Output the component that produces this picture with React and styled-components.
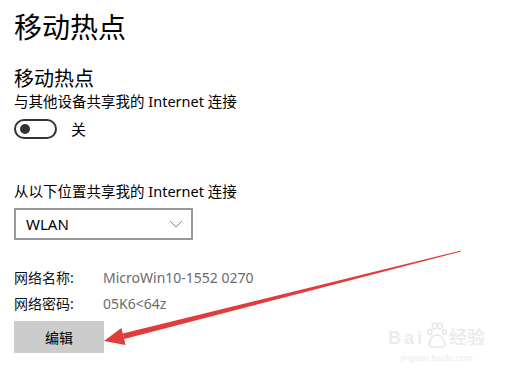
import React from 'react';
import styled, { createGlobalStyle } from 'styled-components';

const GlobalStyle = createGlobalStyle`
html, body {
  margin: 0;
  padding: 0;
  background: #fff;
}
body {
  font-family: "Noto Sans", "Noto Sans CJK SC", sans-serif;
  color: #000;
}
`
const Page = styled.div`
position: relative;
width: 506px;
height: 379px;
overflow: hidden;
box-sizing: border-box;
padding: 8px 0 0 14px;
display: flex;
flex-direction: column;
align-items: flex-start;
`
const Title = styled.h1`
margin: 0;
font-weight: 400;
font-size: 28px;
line-height: 38px;
`
const SectionTitle = styled.h2`
margin: 21px 0 0 0;
font-weight: 400;
font-size: 20px;
line-height: 24px;
`
const Caption = styled.p`
margin: ${p => p.$top || 0}px 0 0 0;
font-size: 14.5px;
line-height: 20px;
`
const ToggleRow = styled.div`
display: flex;
align-items: center;
gap: 14px;
margin-top: 7px;
font-size: 15px;
`
const Switch = styled.div`
box-sizing: border-box;
width: 43px;
height: 20px;
border: 2px solid #333;
border-radius: 10px;
display: flex;
align-items: center;
padding-left: 4px;
`
const Knob = styled.span`
width: 10px;
height: 10px;
border-radius: 50%;
background: #333;
`
const Select = styled.div`
box-sizing: border-box;
margin-top: 7px;
width: 179px;
height: 32px;
border: 2px solid #999;
display: flex;
align-items: center;
justify-content: space-between;
padding: 0 8px 0 10px;
font-size: 15px;
`
const InfoGrid = styled.div`
display: grid;
grid-template-columns: 89px auto;
row-gap: 6px;
margin-top: 28px;
font-size: 14px;
line-height: 20px;
`
const Label = styled.span`
color: #111;
`
const Value = styled.span`
color: #6b6b6b;
`
const Button = styled.button`
margin-top: 7px;
width: 90px;
height: 32px;
border: none;
background: #cccccc;
font-family: inherit;
font-size: 14px;
color: #000;
padding: 0;
`
const Overlay = styled.svg`
position: absolute;
left: 0;
top: 0;
pointer-events: none;
`
const Watermark = styled.div`
position: absolute;
left: 388px;
top: 321px;
color: #ececec;
font-family: "Liberation Sans", "Noto Sans CJK SC", sans-serif;
display: flex;
flex-direction: column;
align-items: center;
`
const MarkTop = styled.div`
display: flex;
align-items: flex-end;
gap: 1px;
font-size: 18px;
font-weight: 700;
line-height: 22px;
`
const MarkWord = styled.span`
letter-spacing: ${p => p.$spacing || 0}px;
`
const MarkSub = styled.div`
margin-top: 4px;
font-size: 9px;
line-height: 10px;
`

const Chevron = () => (
  <svg width="14" height="8" viewBox="0 0 14 8">
    <path d="M1 1 L7 7 L13 1" fill="none" stroke="#888" strokeWidth="1" />
  </svg>
)

const Paw = () => (
  <svg width="22" height="28" viewBox="0 0 22 28">
    <g fill="none" stroke="#e6e6e6" strokeWidth="1.5">
      <ellipse cx="4" cy="11" rx="2" ry="2.6" />
      <ellipse cx="8.5" cy="5" rx="2.2" ry="3" />
      <ellipse cx="14" cy="5" rx="2.2" ry="3" />
      <ellipse cx="18.5" cy="11" rx="2" ry="2.6" />
      <path d="M3 23 Q5 14 11 14 Q17 14 19 23 Q19 26 15 26 L7 26 Q3 26 3 23 Z" />
    </g>
  </svg>
)

export default function App() {
  return (
    <>
      <GlobalStyle />
      <Page>
        <Title>移动热点</Title>
        <SectionTitle>移动热点</SectionTitle>
        <Caption>与其他设备共享我的 Internet 连接</Caption>
        <ToggleRow>
          <Switch><Knob /></Switch>
          <span>关</span>
        </ToggleRow>
        <Caption $top={42}>从以下位置共享我的 Internet 连接</Caption>
        <Select>
          <span>WLAN</span>
          <Chevron />
        </Select>
        <InfoGrid>
          <Label>网络名称:</Label>
          <Value>MicroWin10-1552 0270</Value>
          <Label>网络密码:</Label>
          <Value>05K6&lt;64z</Value>
        </InfoGrid>
        <Button>编辑</Button>
        <Watermark>
          <MarkTop>
            <MarkWord $spacing={3}>Bai</MarkWord>
            <Paw />
            <MarkWord>经验</MarkWord>
          </MarkTop>
          <MarkSub>jingyan.baidu.com</MarkSub>
        </Watermark>
        <Overlay width="506" height="379" viewBox="0 0 506 379">
          <polygon
            points="461,250.6 461.1,251.4 124.2,339 122.6,333.4"
            fill="#e23b3b"
          />
          <polygon points="104,341 121.4,328 125.6,345" fill="#e23b3b" />
        </Overlay>
      </Page>
    </>
  );
}
